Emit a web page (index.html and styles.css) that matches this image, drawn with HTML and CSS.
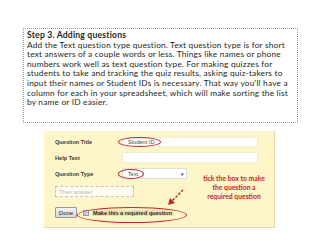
FILE: index.html
```html
<!DOCTYPE html>
<html lang="en">

<head>
  <meta charset="UTF-8" />
  <title>Step 3. Adding questions</title>
  <link rel="stylesheet" href="styles.css">
</head>

<body>

  <div class="step">
    <div class="step-title">Step 3. Adding questions</div>
    <p class="step-text">
      Add the Text question type question. Text question type is for short<br>
      text answers of a couple words or less. Things like names or phone<br>
      numbers work well as text question type. For making quizzes for<br>
      students to take and tracking the quiz results, asking quiz-takers to<br>
      input their names or Student IDs is necessary. That way you'll have a<br>
      column for each in your spreadsheet, which will make sorting the list<br>
      by name or ID easier.
    </p>
  </div>

  <div class="editor">
    <div class="row row-title">
      <label class="field-label">Question Title</label>
      <div class="field">Student ID</div>
    </div>
    <div class="row row-help">
      <label class="field-label">Help Text</label>
      <div class="field"></div>
    </div>
    <div class="row row-type">
      <label class="field-label">Question Type</label>
      <div class="field select">Text <span class="caret">&#9662;</span></div>
    </div>
    <div class="row row-answer">
      <div class="answer">Their answer</div>
    </div>
    <div class="row row-done">
      <button class="done">Done</button>
      <span class="check">&#10003;</span>
      <span class="required">Make this a required question</span>
    </div>

    <!-- annotations drawn on top of the screenshot -->
    <span class="ring ring-title"></span>
    <span class="ring ring-type"></span>
    <span class="ring ring-required"></span>
    <svg class="arrow" width="20" height="20" viewBox="0 0 20 20">
      <path d="M17 2 L6 13" stroke="#c0272d" stroke-width="1.5" stroke-dasharray="2.5 1.5" fill="none" />
      <path d="M2 17 L4 10 L9 15 Z" fill="#c0272d" />
    </svg>
    <div class="note">tick the box to make<br>the question a<br>required question</div>
  </div>

</body>

</html>
```

FILE: styles.css
```css
/* page */
body {
  margin: 0;
  background: #fff;
  width: 320px;
  height: 247px;
  overflow: hidden;
}

/* dotted text box */
.step {
  margin: 28px 0 0 23px;
  width: 268px;
  height: 91px;
  padding: 2px 2px 0 3px;
  border: 1px dotted #9a9a9a;
  font-family: Lato, 'Liberation Sans', sans-serif;
  font-size: 8.3px;
  letter-spacing: 0.2px;
  line-height: 9.6px;
  color: #231f20;
}

.step-title {
  font-weight: bold;
  font-size: 8.6px;
}

.step-text {
  margin: 0;
  white-space: nowrap;
}

/* form screenshot */
.editor {
  position: relative;
  margin: 8px 0 0 44px;
  width: 219px;
  height: 90px;
  padding: 6px 0 0 11px;
  background: #fef5c8;
  border-right: 1px solid #e6daa6;
  border-bottom: 1px solid #e6daa6;
  font-family: Arial, 'Liberation Sans', sans-serif;
  font-size: 5.6px;
  color: #333;
}

.row {
  display: flex;
  align-items: center;
}

.row-title { height: 10px; }
.row-help { height: 11px; margin-top: 5px; }
.row-type { height: 11px; margin-top: 5px; }
.row-answer { height: 11px; margin-top: 7px; }
.row-done { height: 11px; margin-top: 10px; }

.field-label {
  width: 67px;
  font-weight: bold;
  color: #3a3a3a;
}

.field {
  box-sizing: border-box;
  width: 136px;
  height: 100%;
  padding-left: 5px;
  display: flex;
  align-items: center;
  background: #fff;
  border: 1px solid #f2ecd6;
  color: #444;
}

.select {
  width: 65px;
  justify-content: space-between;
  padding-right: 2px;
  border-color: #ddd;
}

.caret {
  font-size: 5px;
  color: #222;
}

.answer {
  box-sizing: border-box;
  width: 79px;
  height: 100%;
  padding-left: 3px;
  display: flex;
  align-items: center;
  border: 1px dashed #c9c4b0;
  background: #fffdf2;
  color: #b8b8b8;
  font-size: 5.8px;
}

.done {
  box-sizing: border-box;
  width: 22px;
  height: 11px;
  padding: 0;
  font-family: Arial, 'Liberation Sans', sans-serif;
  font-size: 6px;
  color: #222;
  border: 1px solid #9a9a9a;
  border-radius: 1px;
  background: linear-gradient(#f4f4f4, #d6d6d6);
}

.check {
  box-sizing: border-box;
  width: 6px;
  height: 6px;
  margin-left: 6px;
  border: 1px solid #8a9bb8;
  background: #dde6f4;
  color: #3f63a8;
  font-size: 5px;
  line-height: 4px;
  text-align: center;
}

.required {
  margin-left: 3px;
  padding: 0 1px;
  font-weight: bold;
  color: #2a2a2a;
  background: #e9e0b4;
}

/* red annotations */
.ring {
  position: absolute;
  border: 1px solid #c0272d;
  border-radius: 50%;
}

.ring-title {
  left: 74px;
  top: 6px;
  width: 41px;
  height: 8px;
}

.ring-type {
  left: 74px;
  top: 38px;
  width: 24px;
  height: 8px;
}

.ring-required {
  left: 33px;
  top: 76px;
  width: 108px;
  height: 14px;
}

.arrow {
  position: absolute;
  left: 122px;
  top: 57px;
}

.note {
  position: absolute;
  left: 157px;
  top: 43px;
  width: 66px;
  text-align: center;
  font-family: Lato, 'Liberation Sans', sans-serif;
  font-weight: bold;
  font-size: 6.8px;
  line-height: 9px;
  color: #c0272d;
}
```
